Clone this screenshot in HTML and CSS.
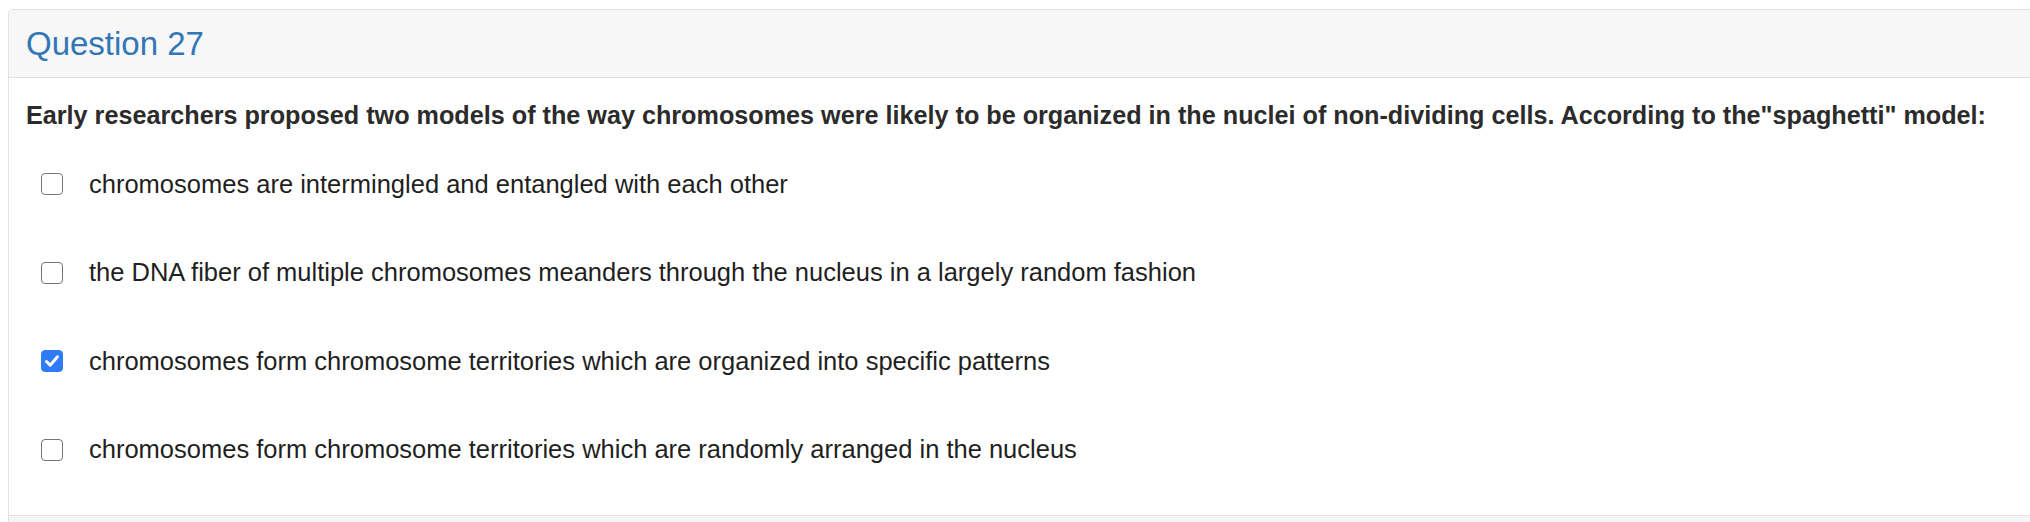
FILE: index.html
```html
<!DOCTYPE html>
<html>
<head>
<meta charset="utf-8">
<link rel="stylesheet" href="styles.css">
</head>
<body>
<div class="card">
  <div class="card-header">
    <h2 class="title">Question 27</h2>
  </div>
  <div class="card-body">
    <p class="prompt">Early researchers proposed two models of the way chromosomes were likely to be organized in the nuclei of non-dividing cells. According to the"spaghetti" model:</p>
    <ul class="options">
      <li class="option"><span class="box"></span><span class="label">chromosomes are intermingled and entangled with each other</span></li>
      <li class="option"><span class="box"></span><span class="label">the DNA fiber of multiple chromosomes meanders through the nucleus in a largely random fashion</span></li>
      <li class="option"><span class="box checked"><svg viewBox="0 0 22 22" width="22" height="22"><path d="M5.5 11.5 L9.2 15.2 L16.5 6.8" fill="none" stroke="#fff" stroke-width="3" stroke-linecap="round" stroke-linejoin="round"/></svg></span><span class="label">chromosomes form chromosome territories which are organized into specific patterns</span></li>
      <li class="option"><span class="box"></span><span class="label">chromosomes form chromosome territories which are randomly arranged in the nucleus</span></li>
    </ul>
  </div>
  <div class="card-footer"></div>
</div>
</body>
</html>
```
FILE: styles.css
```css
html, body {
  margin: 0;
  padding: 0;
  background: #fff;
  overflow: hidden;
}
body {
  font-family: "Liberation Sans", Arial, Helvetica, sans-serif;
  color: #222;
}
.card {
  margin: 9px 0 0 8px;
  width: 2060px;
  border: 1px solid #e2e2e2;
  border-radius: 5px 0 0 0;
}
.card-header {
  height: 67px;
  background: #f7f7f7;
  border-bottom: 1px solid #e2e2e2;
  border-radius: 5px 0 0 0;
  display: flex;
  align-items: center;
  padding: 0 17px;
}
.title {
  margin: 0;
  font-size: 33px;
  font-weight: normal;
  color: #3276b6;
  line-height: 1;
}
.card-body {
  height: 437px;
  padding: 0 17px;
  box-sizing: border-box;
}
.prompt {
  margin: 0 0 11px;
  padding-top: 23px;
  font-size: 25.2px;
  font-weight: bold;
  line-height: 28px;
  color: #2b2b2b;
}
.options {
  list-style: none;
  margin: 0;
  padding: 0;
}
.option {
  display: flex;
  align-items: center;
  height: 88.5px;
}
.box {
  width: 22px;
  height: 22px;
  box-sizing: border-box;
  border: 1.5px solid #767676;
  border-radius: 4px;
  margin-left: 15px;
  flex: none;
  background: #fff;
}
.box.checked {
  background: #2f7cf6;
  border-color: #2f7cf6;
  position: relative;
}
.box.checked svg {
  position: absolute;
  left: -1.5px;
  top: -1.5px;
}
.label {
  margin-left: 26px;
  font-size: 25.5px;
  color: #1f1f1f;
}
.card-footer {
  height: 20px;
  background: #f5f5f5;
  border-top: 1px solid #e2e2e2;
}
```
